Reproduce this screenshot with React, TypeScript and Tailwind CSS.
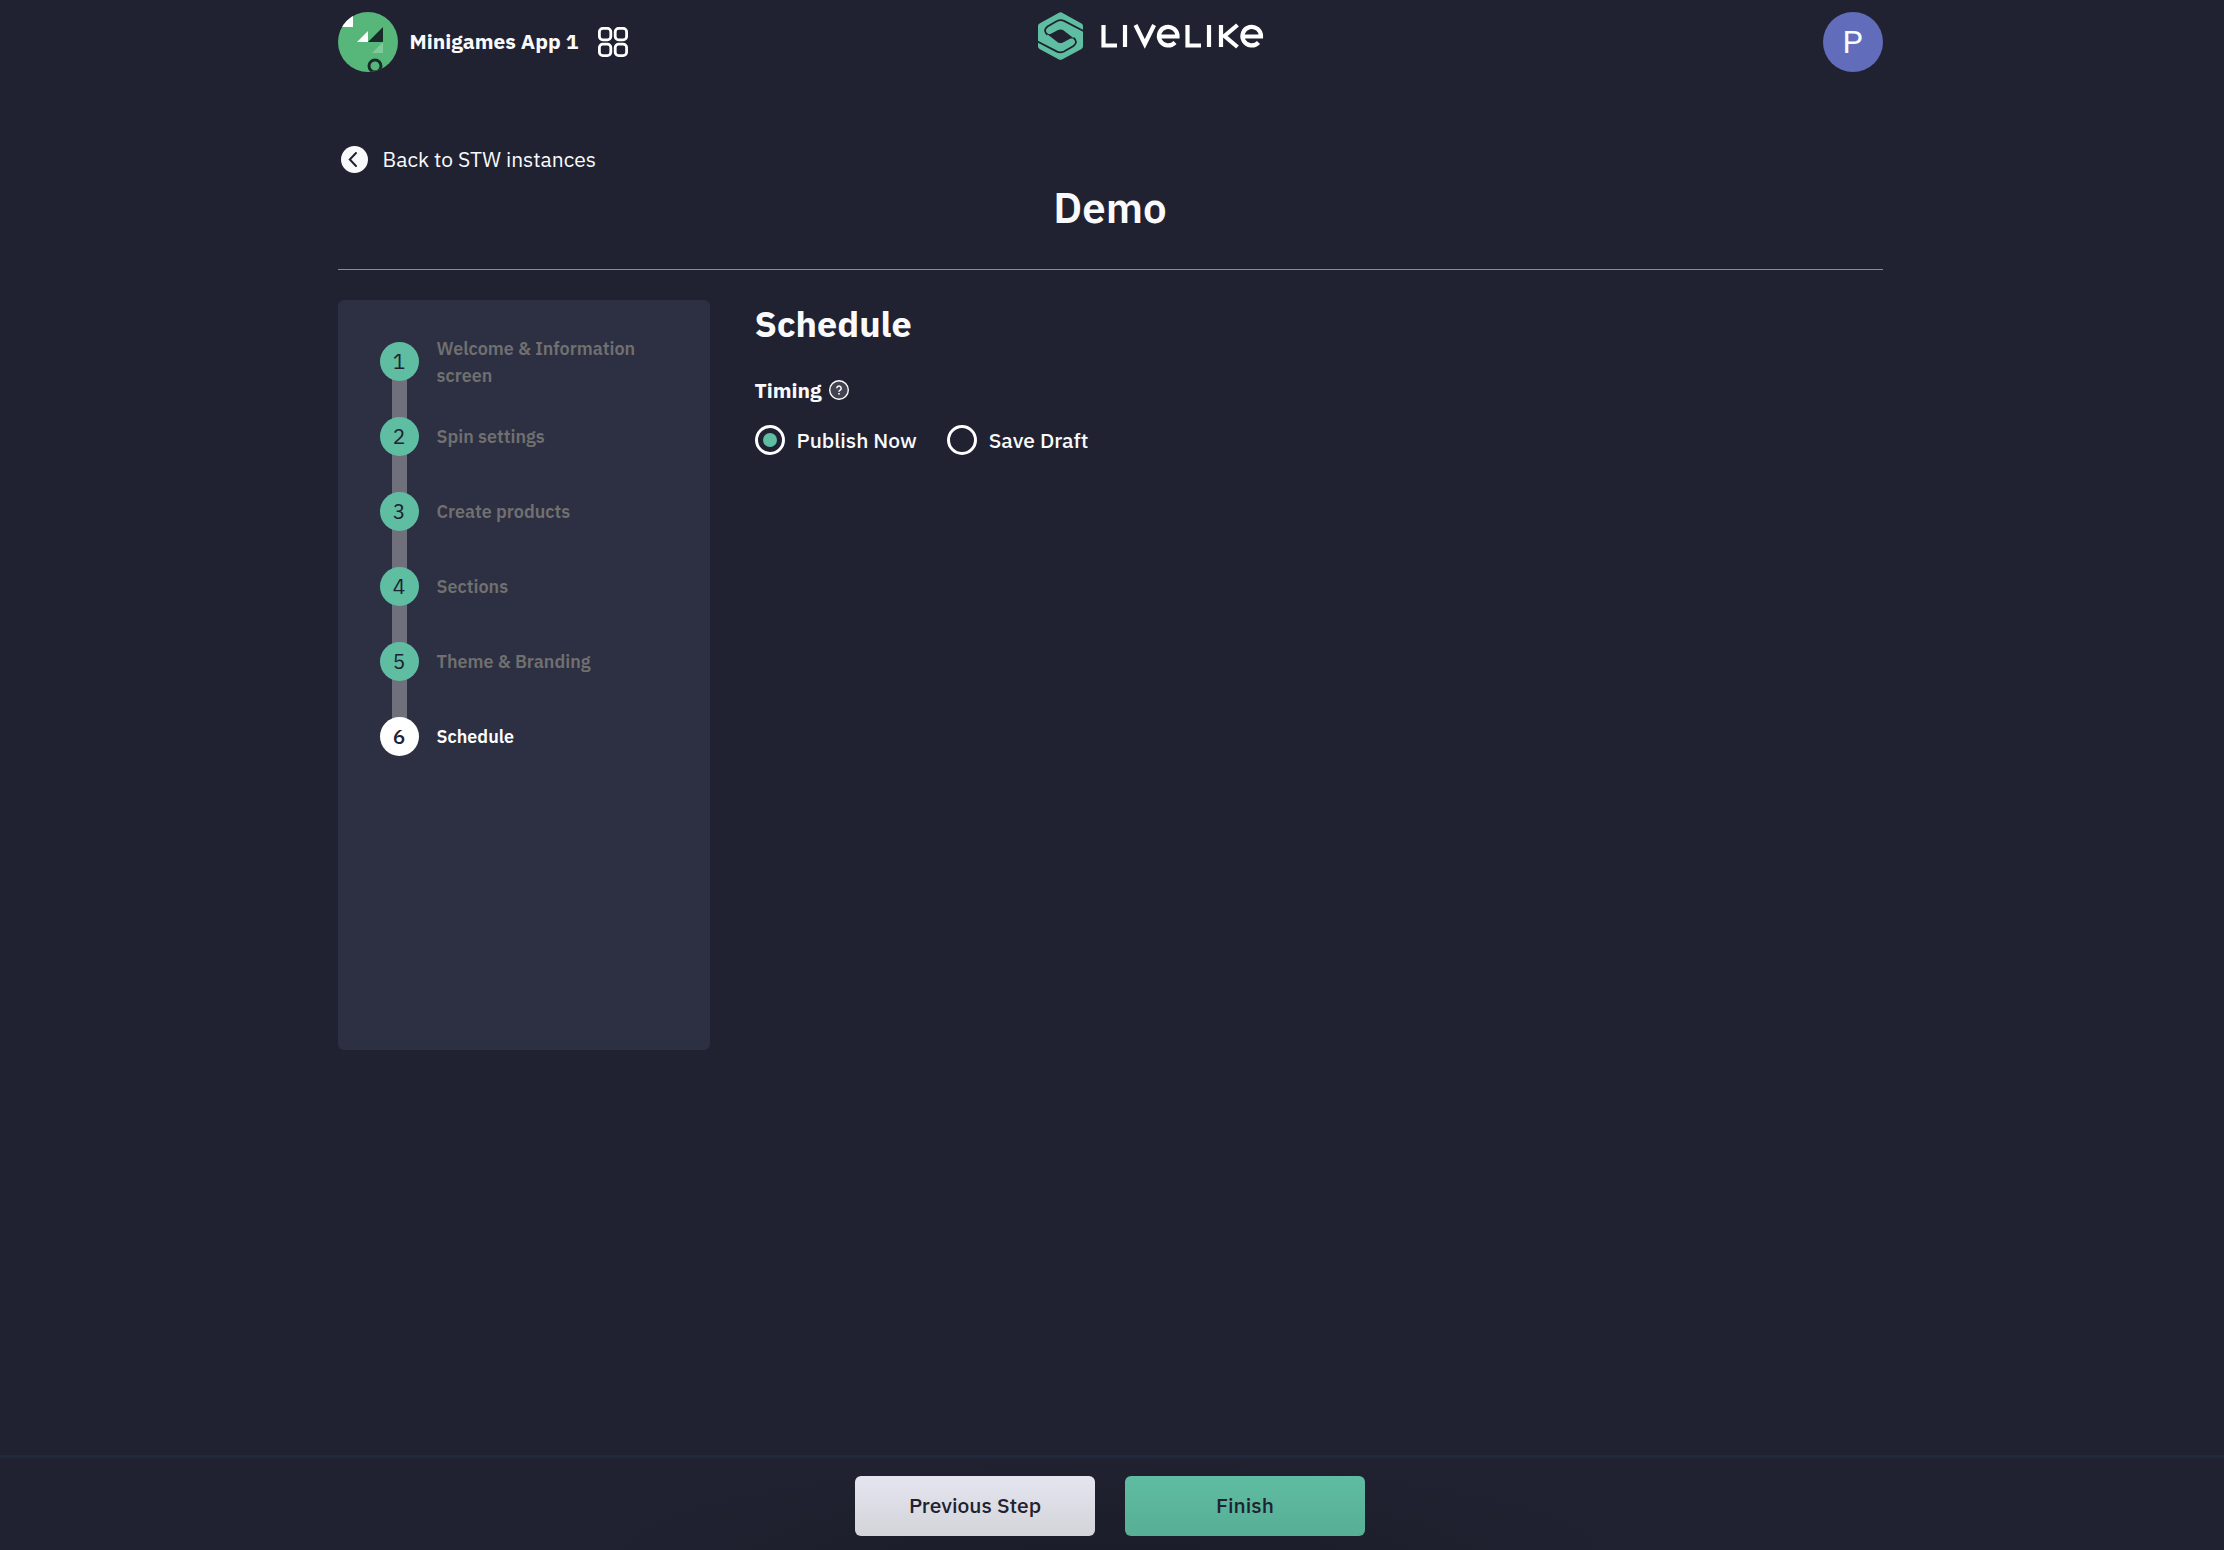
import { useState } from "react";

const steps = [
  "Welcome & Information screen",
  "Spin settings",
  "Create products",
  "Sections",
  "Theme & Branding",
  "Schedule",
];

const timingOptions = [
  { value: "publish", label: "Publish Now" },
  { value: "draft", label: "Save Draft" },
];

function AppBadge() {
  return (
    <svg viewBox="0 0 60 60" className="size-15 rounded-full" aria-hidden="true">
      <rect width="60" height="60" fill="#57b77b" />
      <path d="M0 15V0h15v15z" fill="#fff" />
      <path d="M19 30l11-11v11z" fill="#fff" />
      <path d="M30 30l15-15v15z" fill="#182b28" />
      <path d="M34 41l11-11v11z" fill="#7fcb9c" />
      <circle cx="37" cy="54" r="6" fill="none" stroke="#182b28" strokeWidth="3" />
    </svg>
  );
}

function GridIcon() {
  return (
    <svg viewBox="0 0 30 30" className="size-[30px]" fill="none" stroke="#fff" strokeWidth="2.8" aria-hidden="true">
      <rect x="1.4" y="1.4" width="11.4" height="11.4" rx="3.4" />
      <rect x="17.2" y="1.4" width="11.4" height="11.4" rx="3.4" />
      <rect x="1.4" y="17.2" width="11.4" height="11.4" rx="3.4" />
      <rect x="17.2" y="17.2" width="11.4" height="11.4" rx="3.4" />
    </svg>
  );
}

function Logo() {
  return (
    <svg viewBox="0 0 226 48" className="h-12 w-[226px]" role="img" aria-label="LiveLike">
      <path
        d="M20.500 0.900Q22.500 -0.300 24.500 0.900L43.500 11.600Q45 12.500 45 14V34.500Q45 36 43.500 36.900L24.500 47.300Q22.500 48.400 20.500 47.300L1.500 36.900Q0 36 0 34.500V14Q0 12.500 1.500 11.600z"
        fill="#5fbda2"
      />
      <g fill="none" stroke="#212231" strokeWidth="1.800">
        <path d="M45.500 19L26 8.900Q22.500 7.400 19 9L9.500 14.500Q4.500 18.500 9.500 22.700" />
        <path d="M-0.500 29.500L19 39.600Q22.500 41.100 26 39.500L35.500 34Q40.500 30 35.500 25.800" />
      </g>
      <path
        d="M9 22L12.500 21.900L20 18Q22.500 17 25 18L36 26.500L32.500 26.600L25 30.500Q22.500 31.500 20 30.500z"
        fill="#212231"
      />
      <g fill="none" stroke="#fff" strokeWidth="4.200">
        <path d="M65.500 13v20.500h13.500" />
        <path d="M87 13v22" />
        <path d="M97.500 13l9.300 19l9.300-19" />
        <path d="M121.500 24.500h18a9.300 9.300 0 1 0-2.500 6" />
        <path d="M149.500 13v20.500h13.500" />
        <path d="M171 13v22" />
        <path d="M183 13v22M199.500 13l-13 11l13 11" />
        <path d="M205 24.500h18a9.300 9.300 0 1 0-2.500 6" />
      </g>
    </svg>
  );
}

function BackIcon() {
  return (
    <svg viewBox="0 0 27 27" className="size-[27px]" aria-hidden="true">
      <circle cx="13.500" cy="13.500" r="13.500" fill="#f9fafc" />
      <path d="M15 7l-6.200 6.500l6.200 6.500" fill="none" stroke="#212231" strokeWidth="2" strokeLinecap="round" />
    </svg>
  );
}

function HelpIcon() {
  return (
    <svg viewBox="0 0 20 20" className="size-5" fill="none" stroke="#fff" aria-hidden="true">
      <circle cx="10" cy="10" r="9.300" fill="#424452" strokeWidth="1.400" />
      <path d="M7.800 8.200a2.200 2.200 0 1 1 3.400 1.900c-.8.500-1.200.8-1.200 1.600" strokeWidth="1.500" />
      <circle cx="10" cy="13.800" r="0.500" strokeWidth="1" fill="#fff" />
    </svg>
  );
}

function Header() {
  return (
    <header className="grid grid-cols-3 items-start pt-3">
      <div className="flex items-center gap-3">
        <AppBadge />
        <span className="text-[21px] font-bold">Minigames App 1</span>
        <button type="button" aria-label="Switch app" className="ml-2">
          <GridIcon />
        </button>
      </div>
      <div className="flex justify-center pl-[82px]">
        <Logo />
      </div>
      <button
        type="button"
        aria-label="Account"
        className="flex size-15 items-center justify-center justify-self-end rounded-full bg-[#616cba] font-['Roboto',sans-serif] text-[32px]"
      >
        P
      </button>
    </header>
  );
}

function Stepper({ current }: { current: number }) {
  return (
    <aside className="min-h-[750px] w-[372px] shrink-0 rounded-md bg-[#2d2f42] pt-[42px] pl-[42px]">
      <ol className="flex flex-col gap-9">
        {steps.map((step, idx) => {
          const active = idx === current;
          return (
            <li key={step} className="relative flex h-[39px] items-center gap-[18px]">
              {idx < steps.length - 1 && (
                <span className="absolute top-5 left-3 h-[75px] w-[15px] bg-[#6f707c]" />
              )}
              <span
                className={`relative flex size-[39px] shrink-0 items-center justify-center rounded-full text-[21px] text-[#212231] ${
                  active ? "bg-white font-medium" : "bg-[#5fbda2]"
                }`}
              >
                {idx + 1}
              </span>
              <span
                className={`w-[216px] text-[18px] leading-[27px] font-semibold ${
                  active ? "text-white" : "text-[#707070]"
                }`}
              >
                {step}
              </span>
            </li>
          );
        })}
      </ol>
    </aside>
  );
}

export default function App() {
  const [timing, setTiming] = useState("publish");

  return (
    <div className="flex min-h-screen flex-col bg-[#212231] pr-1 font-['IBM_Plex_Sans','Noto_Sans',sans-serif] text-[#f9fafc]">
      <div className="mx-auto w-full max-w-[1545px] flex-1">
        <Header />

        <a href="#instances" className="mt-[71px] ml-[3px] flex w-fit items-center gap-[15px] text-[21px] leading-8">
          <BackIcon />
          Back to STW instances
        </a>

        <h1 className="border-b border-[#898b98] pt-[5px] pb-[33px] text-center text-[42px] leading-[56px] font-semibold">
          Demo
        </h1>

        <main className="mt-[30px] flex gap-[45px]">
          <Stepper current={5} />

          <section className="flex-1">
            <h2 className="text-[36px] leading-[48px] font-bold">Schedule</h2>
            <fieldset className="mt-[26px]">
              <legend className="flex items-center gap-[7px] text-[21px] leading-8 font-bold">
                Timing
                <HelpIcon />
              </legend>
              <div className="mt-[18px] flex gap-[30px]">
                {timingOptions.map((option) => (
                  <label key={option.value} className="flex items-center gap-3 text-[21px] leading-8 font-medium">
                    <input
                      type="radio"
                      name="timing"
                      value={option.value}
                      checked={timing === option.value}
                      onChange={() => setTiming(option.value)}
                      className="grid size-[30px] appearance-none place-items-center rounded-full border-3 border-white before:size-[14px] before:rounded-full checked:before:bg-[#5fbda2]"
                    />
                    {option.label}
                  </label>
                ))}
              </div>
            </fieldset>
          </section>
        </main>
      </div>

      <footer className="-mr-1 flex justify-center gap-[30px] border-t-3 border-[#202a3c] bg-[radial-gradient(ellipse_520px_100px_at_50%_110%,#1a1c28,#212231)] bg-origin-border pt-[18px] pr-1 pb-[14px] text-[21px] font-medium text-[#212231]">
        <button type="button" className="h-15 w-60 rounded-md bg-linear-to-b from-[#e5e5f0] to-[#d3d4d9]">
          Previous Step
        </button>
        <button type="button" className="h-15 w-60 rounded-md bg-linear-to-b from-[#5fbda2] to-[#57ae95]">
          Finish
        </button>
      </footer>
    </div>
  );
}
